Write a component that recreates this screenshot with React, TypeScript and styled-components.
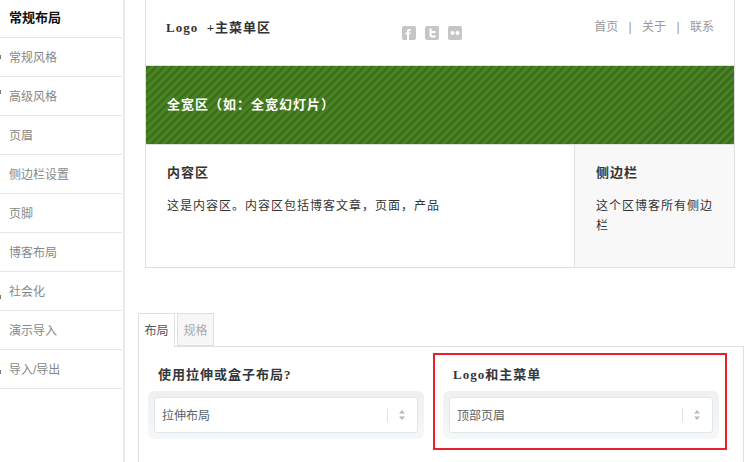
import React from "react";
import styled, { createGlobalStyle } from "styled-components";

const Global = createGlobalStyle`
  html, body { margin: 0; padding: 0; background: #fff; }
  body { width: 748px; height: 462px; overflow: hidden; font-family: "Liberation Sans", "Noto Sans CJK SC", sans-serif; font-size: 12px; text-spacing-trim: space-all; }
  * { box-sizing: border-box; }
`;

const Page = styled.div`
  display: flex;
  width: 748px;
  height: 462px;
  overflow: hidden;
  position: relative;
`;

const Sidebar = styled.ul`
  width: 125px;
  flex: none;
  margin: 0;
  padding: 0 1px 0 0;
  list-style: none;
  border-right: 2px solid #e8ebed;
`;

const SideItem = styled.li<{ $active?: boolean; $mark?: number }>`
  position: relative;
  height: 39px;
  line-height: 40px;
  padding-left: 9px;
  border-bottom: 1px solid #e2e8ea;
  color: ${(p) => (p.$active ? "#111" : "#888")};
  font-size: ${(p) => (p.$active ? 13 : 12)}px;
  font-weight: ${(p) => (p.$active ? 700 : 400)};
  &:first-child { height: 38px; line-height: 36px; }
  &::before {
    content: "";
    display: ${(p) => (p.$mark === undefined ? "none" : "block")};
    position: absolute;
    left: 0;
    top: ${(p) => p.$mark ?? 0}px;
    width: 1px;
    height: 4px;
    background: #777;
  }
`;

const Main = styled.div`
  flex: 1;
  padding-left: 13px;
  min-width: 0;
`;

const Wire = styled.div`
  width: 590px;
  margin-left: 7px;
  height: 268px;
  border: 1px solid #e0e0e0;
  border-top: none;
  display: flex;
  flex-direction: column;
`;

const Header = styled.div`
  height: 66px;
  flex: none;
  border-bottom: 1px solid #e0e0e0;
  display: flex;
  padding: 19px 20px 0 20px;
`;

const Serif = styled.div`
  font-family: "Liberation Serif", "Noto Sans CJK SC", serif;
  font-size: 13px;
  font-weight: 700;
  letter-spacing: 1px;
`;

const Logo = styled(Serif)`
  width: 236px;
  color: #333;
  line-height: 17px;
`;

const Social = styled.div`
  display: flex;
  gap: 9px;
  margin-top: 7px;
  height: 14px;
`;

const Nav = styled.nav`
  margin-left: auto;
  display: flex;
  color: #999;
  line-height: 17px;
  gap: 10.4px;
`;

const Hero = styled.div`
  height: 79px;
  flex: none;
  display: flex;
  align-items: center;
  padding-left: 21px;
  padding-bottom: 4px;
  color: #fff;
  font-size: 13px;
  font-weight: 700;
  letter-spacing: 1px;
  border-bottom: 1px solid #e0e0e0;
  background: repeating-linear-gradient(-45deg, #4b8125 0, #4b8125 3.5px, #3a6e1c 3.5px, #3a6e1c 5.66px);
`;

const Body = styled.div`
  flex: 1;
  display: flex;
  letter-spacing: 1px;
`;

const Column = styled.div`
  flex: 1;
  padding: 19px 21px 0;
`;

const Aside = styled.div`
  width: 160px;
  flex: none;
  padding: 19px 21px 0;
  background: #f8f8f8;
  border-left: 1px solid #e0e0e0;
`;

const ColTitle = styled.div`
  font-size: 13px;
  font-weight: 700;
  color: #333;
  line-height: 18px;
  margin-bottom: 14px;
`;

const ColText = styled.div`
  color: #333;
  line-height: 20px;
`;

const Tabs = styled.div`
  display: flex;
  gap: 2px;
  margin-top: 45px;
  height: 34px;
  position: relative;
  z-index: 1;
`;

const Tab = styled.div<{ $active?: boolean }>`
  width: 37px;
  height: ${(p) => (p.$active ? 34 : 33)}px;
  text-align: center;
  line-height: 34px;
  border: 1px solid #e0e0e0;
  border-bottom: ${(p) => (p.$active ? "none" : "1px solid #e0e0e0")};
  background: ${(p) => (p.$active ? "#fff" : "#f7f7f7")};
  color: ${(p) => (p.$active ? "#555" : "#aaa")};
`;

const Panel = styled.div`
  width: 606px;
  height: 120px;
  margin-top: -1px;
  border: 1px solid #e0e0e0;
  border-bottom: none;
  padding: 9px 9px 0;
  display: flex;
  gap: 19px;
`;

const Field = styled.div`
  width: 276px;
  flex: none;
`;

const FieldLabel = styled(Serif)`
  padding-left: 10px;
  margin-top: 10px;
  color: #32373c;
  line-height: 18px;
  margin-bottom: 7px;
`;

const SelectWell = styled.div`
  height: 48px;
  padding: 6px;
  border-radius: 6px;
  background: linear-gradient(#eff0f1, #f6f7f8);
`;

const Select = styled.div`
  height: 36px;
  background: #fff;
  border: 1px solid #e0e7ea;
  border-radius: 3px;
  display: flex;
  align-items: center;
  padding-left: 7px;
  padding-bottom: 1px;
  color: #5b6468;
`;

const Sep = styled.span`
  margin-left: auto;
  width: 1px;
  height: 14px;
  background: #e2e2e2;
`;

const Arrows = styled.svg`
  width: 8px;
  height: 12px;
  margin: 0 11px 0 10px;
`;

const Highlight = styled.div`
  position: absolute;
  left: 433px;
  top: 353px;
  width: 294px;
  height: 97px;
  border: 2px solid #e8202a;
  pointer-events: none;
`;

function Chevrons() {
  return (
    <Arrows viewBox="0 0 8 12">
      <path d="M4 1 L7 4.5 H1 Z" fill="#b8b8b8" />
      <path d="M4 11 L7 7.5 H1 Z" fill="#b8b8b8" />
    </Arrows>
  );
}

const items: { t: string; mark?: number }[] = [
  { t: "常规布局" },
  { t: "常规风格", mark: 17 },
  { t: "高级风格", mark: 13 },
  { t: "页眉" },
  { t: "侧边栏设置" },
  { t: "页脚" },
  { t: "博客布局" },
  { t: "社会化", mark: 23 },
  { t: "演示导入" },
  { t: "导入/导出", mark: 20 },
];

export default function App() {
  return (
    <Page>
      <Global />
      <Sidebar>
        {items.map((it, i) => (
          <SideItem key={it.t} $active={i === 0} $mark={it.mark}>{it.t}</SideItem>
        ))}
      </Sidebar>
      <Main>
        <Wire>
          <Header>
            <Logo>Logo&nbsp; +主菜单区</Logo>
            <Social>
              <svg width="14" height="14" viewBox="0 0 14 14">
                <rect width="14" height="14" rx="2" fill="#c6c6c6" />
                <path d="M5 14 V8.5 H3.5 V6.5 H5 V5 Q5 3 7 3 H8.5 V5 H7.6 Q7 5 7 5.5 V6.5 H8.5 L8.2 8.5 H7 V14 Z" fill="#fff" />
              </svg>
              <svg width="14" height="14" viewBox="0 0 14 14">
                <rect width="14" height="14" rx="2" fill="#c6c6c6" />
                <path d="M4.5 2.5 H6.6 V5 H10.5 V7 H6.6 V8.5 Q6.6 9.5 7.6 9.5 H10.5 V11.5 H7 Q4.5 11.5 4.5 9 Z" fill="#fff" />
              </svg>
              <svg width="14" height="14" viewBox="0 0 14 14">
                <rect width="14" height="14" rx="2" fill="#c6c6c6" />
                <circle cx="4.5" cy="7" r="2" fill="#fff" />
                <circle cx="9.5" cy="7" r="2" fill="#fff" />
              </svg>
            </Social>
            <Nav>
              <span>首页</span><span>|</span><span>关于</span><span>|</span><span>联系</span>
            </Nav>
          </Header>
          <Hero>全宽区（如：全宽幻灯片）</Hero>
          <Body>
            <Column>
              <ColTitle>内容区</ColTitle>
              <ColText>这是内容区。内容区包括博客文章，页面，产品</ColText>
            </Column>
            <Aside>
              <ColTitle>侧边栏</ColTitle>
              <ColText>这个区博客所有侧边栏</ColText>
            </Aside>
          </Body>
        </Wire>
        <Tabs>
          <Tab $active>布局</Tab>
          <Tab>规格</Tab>
        </Tabs>
        <Panel>
          <Field>
            <FieldLabel>使用拉伸或盒子布局?</FieldLabel>
            <SelectWell>
              <Select>拉伸布局<Sep /><Chevrons /></Select>
            </SelectWell>
          </Field>
          <Field>
            <FieldLabel>Logo和主菜单</FieldLabel>
            <SelectWell>
              <Select>顶部页眉<Sep /><Chevrons /></Select>
            </SelectWell>
          </Field>
        </Panel>
      </Main>
      <Highlight />
    </Page>
  );
}
